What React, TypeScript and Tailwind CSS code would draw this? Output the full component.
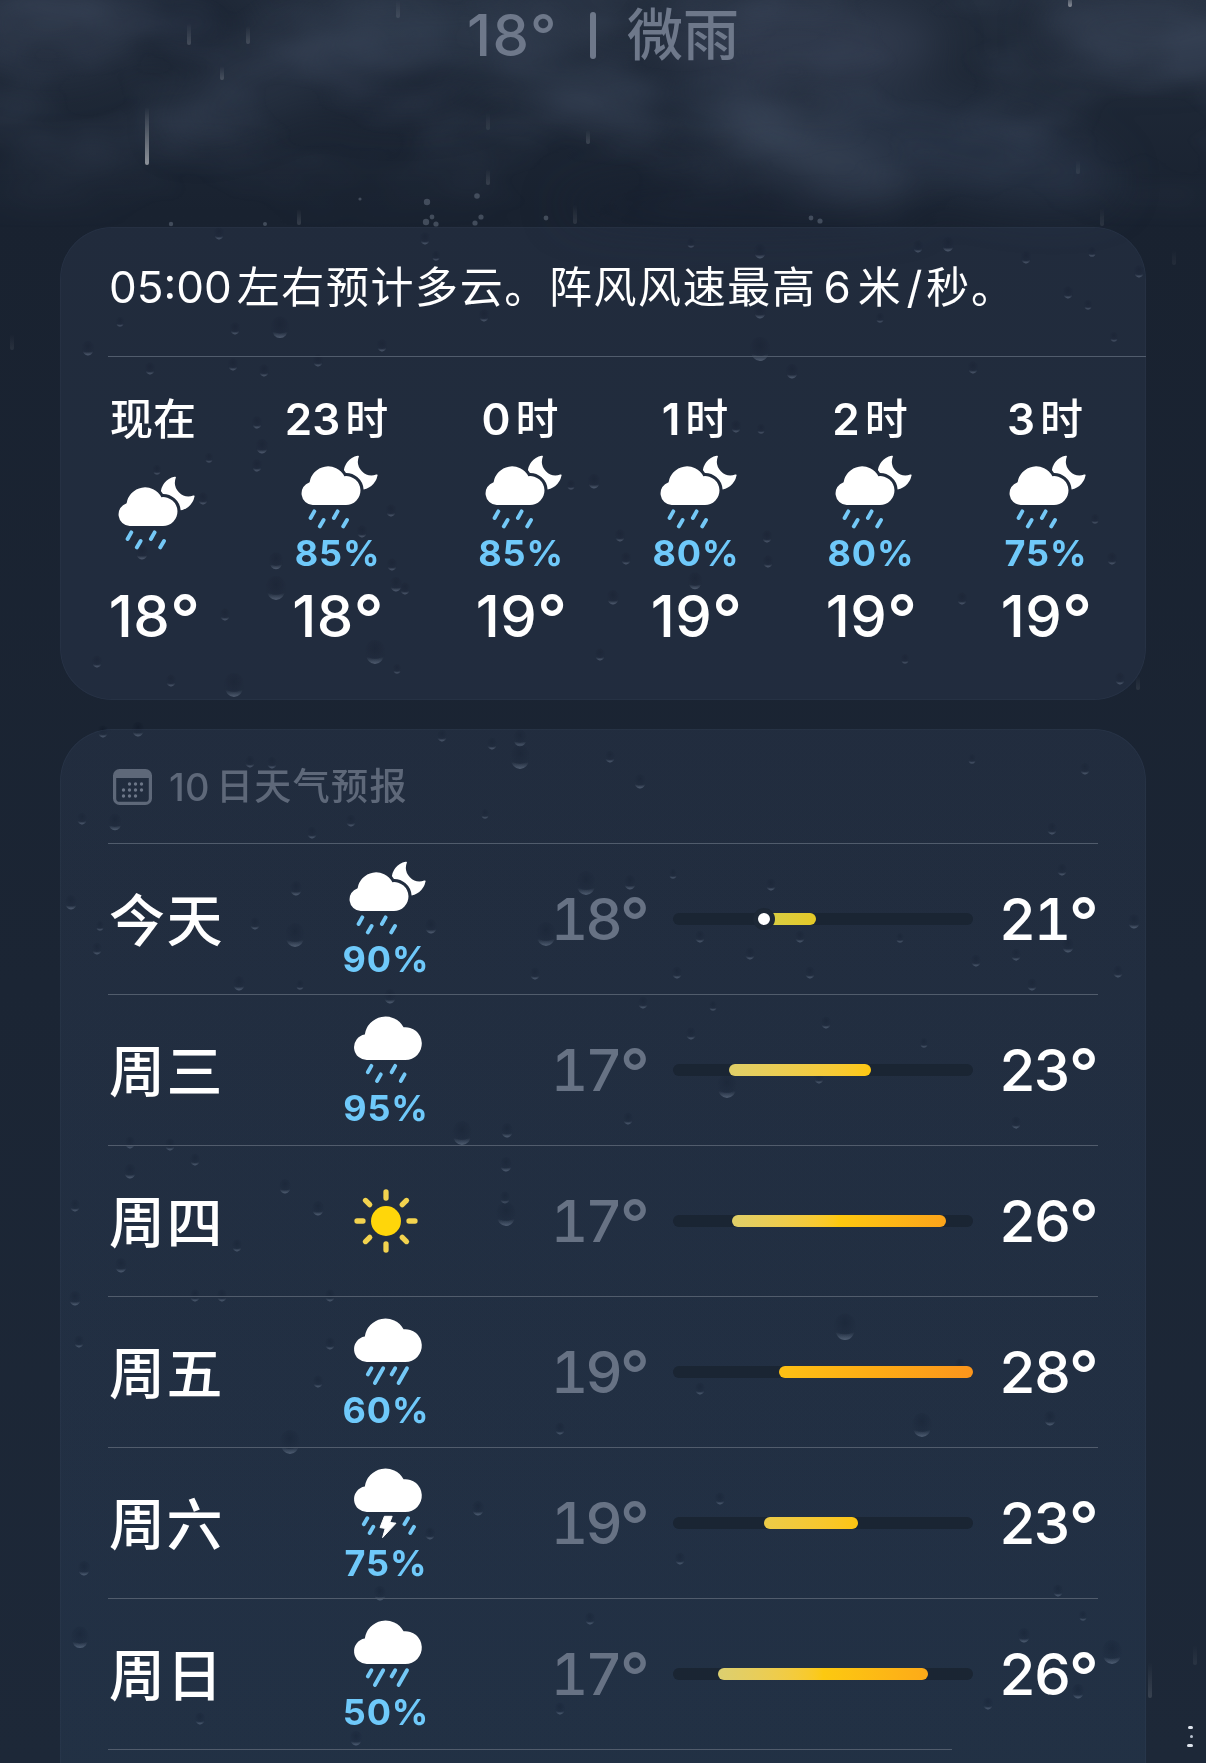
import type { ReactNode } from 'react';
import { clsx } from 'clsx';

type Sky = 'night-rain' | 'rain' | 'heavy-rain' | 'thunder' | 'sunny';

interface Hour {
  hour?: string;
  label: string;
  chance?: string;
  temp: string;
}

interface Day {
  name: string;
  sky: Sky;
  chance?: string;
  low: string;
  high: string;
  left: number;
  width: number;
  bar: string;
  now?: number;
}

const hours: Hour[] = [
  { label: '现在', temp: '18' },
  { hour: '23', label: '时', chance: '85%', temp: '18' },
  { hour: '0', label: '时', chance: '85%', temp: '19' },
  { hour: '1', label: '时', chance: '80%', temp: '19' },
  { hour: '2', label: '时', chance: '80%', temp: '19' },
  { hour: '3', label: '时', chance: '75%', temp: '19' },
];

// left / width / now are pixels on the 300px temperature track
const days: Day[] = [
  { name: '今天', sky: 'night-rain', chance: '90%', low: '18', high: '21', left: 85, width: 58, bar: 'from-[#d6cf48] to-[#e5c926]', now: 91 },
  { name: '周三', sky: 'rain', chance: '95%', low: '17', high: '23', left: 56, width: 142, bar: 'from-[#e0cf68] via-[#efcc48] to-[#fec80d]' },
  { name: '周四', sky: 'sunny', low: '17', high: '26', left: 59, width: 214, bar: 'from-[#e0cf68] via-[#fdc80f] to-[#fca41a]' },
  { name: '周五', sky: 'heavy-rain', chance: '60%', low: '19', high: '28', left: 106, width: 194, bar: 'from-[#fdc014] via-[#fdab14] to-[#fb951c]' },
  { name: '周六', sky: 'thunder', chance: '75%', low: '19', high: '23', left: 91, width: 94, bar: 'from-[#eccb48] to-[#fdc50f]' },
  { name: '周日', sky: 'heavy-rain', chance: '50%', low: '17', high: '26', left: 45, width: 210, bar: 'from-[#dccf70] via-[#fcc910] to-[#fdaa18]' },
];

// x, y, radius of the water beads on the glass
const beads: [number, number, number][] = [
  [219, 235, 5], [425, 240, 5], [436, 257, 4], [280, 330, 9], [235, 330, 5], [120, 323, 4], [88, 350, 6], [150, 370, 5],
  [233, 366, 5], [264, 372, 5], [318, 362, 5], [382, 347, 5], [484, 317, 5], [691, 244, 4], [760, 253, 6], [918, 248, 5],
  [948, 246, 6], [1026, 259, 5], [1092, 253, 4], [1139, 273, 5], [1068, 294, 5], [1088, 306, 4], [760, 313, 6], [880, 319, 4],
  [760, 352, 10], [792, 373, 6], [973, 369, 5], [1114, 338, 4], [209, 459, 4], [257, 424, 5], [262, 448, 6], [257, 467, 5],
  [157, 471, 4], [203, 500, 5], [142, 554, 6], [391, 512, 5], [362, 533, 5], [276, 591, 10], [276, 563, 7], [392, 566, 5],
  [396, 586, 6], [405, 590, 5], [225, 616, 5], [375, 655, 10], [234, 688, 10], [171, 682, 5], [97, 663, 5], [397, 670, 4],
  [594, 483, 6], [571, 486, 4], [736, 428, 5], [761, 430, 4], [620, 537, 5], [626, 560, 5], [613, 599, 6], [695, 583, 7],
  [767, 538, 5], [768, 563, 5], [600, 656, 5], [1112, 560, 5], [1095, 520, 4], [870, 470, 5], [905, 660, 4], [1120, 680, 5],
  [962, 600, 5], [103, 733, 5], [138, 731, 6], [442, 737, 5], [492, 745, 5], [520, 740, 7], [520, 760, 10], [250, 763, 5],
  [272, 764, 5], [82, 820, 5], [115, 824, 7], [312, 834, 5], [351, 822, 5], [485, 815, 4], [610, 758, 5], [640, 783, 6],
  [1085, 770, 5], [1052, 830, 5], [972, 760, 4], [71, 904, 6], [100, 927, 4], [97, 950, 5], [255, 925, 5], [295, 938, 10],
  [296, 890, 6], [431, 928, 6], [239, 985, 6], [300, 986, 4], [390, 998, 6], [586, 886, 10], [546, 937, 10], [630, 884, 6],
  [771, 886, 5], [673, 875, 4], [700, 938, 5], [800, 938, 5], [750, 955, 5], [535, 975, 5], [677, 974, 5], [810, 974, 5],
  [900, 939, 4], [976, 962, 5], [1016, 956, 5], [1068, 947, 6], [1134, 923, 6], [1118, 973, 5], [1062, 871, 5], [1032, 986, 5],
  [643, 1004, 5], [713, 1007, 4], [691, 1035, 5], [826, 1024, 5], [924, 1044, 4], [727, 1089, 10], [819, 1079, 5], [628, 1120, 5],
  [1016, 1124, 5], [462, 1136, 10], [507, 1132, 6], [506, 1166, 6], [505, 1199, 5], [506, 1217, 10], [130, 1144, 5], [170, 1146, 5],
  [195, 1161, 5], [130, 1173, 6], [285, 1188, 6], [318, 1210, 6], [75, 1207, 5], [121, 1267, 6], [237, 1247, 5], [75, 1300, 6],
  [79, 1343, 5], [195, 1297, 5], [222, 1297, 5], [330, 1297, 5], [330, 1345, 5], [290, 1445, 10], [318, 1383, 5], [845, 1330, 11],
  [922, 1428, 10], [960, 1366, 5], [700, 1390, 5], [560, 1430, 5], [1050, 1420, 6], [478, 1510, 6], [80, 1640, 9], [84, 1570, 6],
  [430, 1535, 5], [720, 1500, 5], [1083, 1617, 4], [1112, 1655, 10], [1024, 1637, 6], [1078, 1693, 6], [988, 1705, 5], [356, 1740, 6],
  [380, 1595, 6], [1058, 1592, 5], [590, 1620, 5], [680, 1560, 5], [200, 1720, 5], [560, 1710, 5],
];

// x, bottom y, length, opacity of the falling streaks
const streaks: [number, number, number, number][] = [
  [147, 165, 58, 0.5], [1070, 7, 12, 0.45], [189, 45, 22, 0.16], [248, 44, 18, 0.14], [398, 18, 18, 0.1], [222, 80, 14, 0.16],
  [488, 130, 18, 0.07], [588, 144, 14, 0.14], [488, 185, 16, 0.12], [575, 224, 20, 0.1], [299, 225, 16, 0.13], [1078, 174, 14, 0.07],
  [1102, 226, 18, 0.08], [12, 350, 16, 0.07], [1138, 690, 14, 0.08], [1150, 1698, 36, 0.12], [1195, 1665, 20, 0.06], [1174, 265, 16, 0.05],
];

const splashes: [number, number, number][] = [
  [427, 202, 3.2], [477, 196, 2.8], [432, 217, 2.4], [426, 222, 3.2], [436, 224, 2.6], [481, 217, 2.6], [475, 223, 2.6],
  [546, 218, 2.4], [811, 218, 2.4], [820, 221, 2.6], [171, 224, 2.2], [265, 224, 2], [360, 199, 1.6],
];

function Storm() {
  return (
    <svg viewBox="0 0 1206 1763" className="pointer-events-none absolute inset-0 h-full w-full">
      <defs>
        <filter id="wisps" x="0" y="0" width="1206" height="240" filterUnits="userSpaceOnUse" colorInterpolationFilters="sRGB">
          <feTurbulence type="fractalNoise" baseFrequency="0.006 0.011" numOctaves="3" seed="7" />
          <feColorMatrix values="0 0 0 0 0.29  0 0 0 0 0.34  0 0 0 0 0.43  2.6 0 0 0 -1.0" />
        </filter>
        <filter id="soft" x="-50%" y="-50%" width="200%" height="200%" colorInterpolationFilters="sRGB">
          <feGaussianBlur stdDeviation="22" />
        </filter>
        <linearGradient id="fade" x1="0" y1="0" x2="0" y2="1">
          <stop offset="0" stopColor="#fff" />
          <stop offset="0.5" stopColor="#fff" />
          <stop offset="0.95" stopColor="#000" />
        </linearGradient>
        <mask id="sky">
          <rect width="1206" height="240" fill="url(#fade)" />
        </mask>
        <linearGradient id="fall" x1="0" y1="0" x2="0" y2="1">
          <stop offset="0" stopColor="#fff" stopOpacity="0" />
          <stop offset="1" stopColor="#fff" />
        </linearGradient>
      </defs>
      <g filter="url(#soft)">
        <ellipse cx="50" cy="24" rx="90" ry="50" fill="#364256" opacity="0.4" />
        <ellipse cx="270" cy="85" rx="110" ry="30" fill="#364256" opacity="0.35" transform="rotate(-24 270 85)" />
        <ellipse cx="430" cy="30" rx="120" ry="34" fill="#3a475b" opacity="0.45" />
        <ellipse cx="580" cy="80" rx="110" ry="24" fill="#3a475b" opacity="0.4" transform="rotate(20 580 80)" />
        <ellipse cx="800" cy="45" rx="140" ry="46" fill="#3f4a60" opacity="0.5" />
        <ellipse cx="790" cy="145" rx="130" ry="26" fill="#4a576d" opacity="0.6" transform="rotate(24 790 145)" />
        <ellipse cx="970" cy="150" rx="150" ry="44" fill="#364358" opacity="0.45" transform="rotate(14 970 150)" />
        <ellipse cx="1150" cy="30" rx="110" ry="36" fill="#3c475c" opacity="0.45" />
        <ellipse cx="190" cy="22" rx="55" ry="26" fill="#17202f" opacity="0.7" />
        <ellipse cx="690" cy="92" rx="50" ry="24" fill="#17202f" opacity="0.55" />
        <ellipse cx="400" cy="92" rx="80" ry="20" fill="#17202f" opacity="0.5" />
        <ellipse cx="740" cy="205" rx="180" ry="20" fill="#17202f" opacity="0.5" />
      </g>
      <g mask="url(#sky)">
        <rect width="1206" height="240" filter="url(#wisps)" opacity="0.3" />
      </g>
      {streaks.map(([x, y, len, opacity]) => (
        <rect key={`${x}-${y}`} x={x - 2} y={y - len} width="4" height={len} rx="2" fill="url(#fall)" opacity={opacity} />
      ))}
      {splashes.map(([x, y, r]) => (
        <circle key={`${x}-${y}`} cx={x} cy={y} r={r} fill="#8e9bab" opacity="0.35" />
      ))}
    </svg>
  );
}

function Beads() {
  return (
    <svg viewBox="0 0 1206 1763" className="pointer-events-none absolute inset-0 h-full w-full">
      <defs>
        <radialGradient id="bead" cx="0.5" cy="0.35" r="0.65">
          <stop offset="0" stopColor="#0c1422" stopOpacity="0.42" />
          <stop offset="0.55" stopColor="#121b2a" stopOpacity="0.24" />
          <stop offset="1" stopColor="#1a2434" stopOpacity="0" />
        </radialGradient>
        <linearGradient id="glint" x1="0" y1="0" x2="0" y2="1">
          <stop offset="0.3" stopColor="#8c9aad" stopOpacity="0" />
          <stop offset="1" stopColor="#8c9aad" stopOpacity="0.5" />
        </linearGradient>
      </defs>
      {beads.map(([x, y, r]) => (
        <g key={`${x}-${y}`}>
          <ellipse cx={x} cy={y - r * 0.3} rx={r} ry={r * 1.2} fill="url(#bead)" />
          <path
            d={`M${x - r * 0.9} ${y - r * 0.1}a${r * 0.9} ${r} 0 0 0 ${r * 1.8} 0a${r * 0.95} ${r * 0.7} 0 0 1 ${-r * 1.8} 0z`}
            fill="url(#glint)"
          />
        </g>
      ))}
    </svg>
  );
}

const smallCloud =
  'M11.7 50A11.7 11.7 0 0 1 8.6 27.2A18.6 18.6 0 0 1 43.4 21.2A14.45 14.45 0 1 1 44.5 50Z';
const bigCloud =
  'M12.8 45A12.8 12.8 0 0 1 9.8 19.6A20.8 20.8 0 0 1 48.6 12.3A16.4 16.4 0 1 1 50.4 45Z';

function Drops({ d }: { d: string }) {
  return <path d={d} fill="none" stroke="#74c8f6" strokeWidth="3.9" strokeLinecap="round" />;
}

function SkyIcon({ sky }: { sky: Sky }) {
  if (sky === 'night-rain') {
    return (
      <svg viewBox="0 0 77 74" className="h-[74px] w-[77px] shrink-0">
        <mask id="behind-cloud">
          <rect width="77" height="74" fill="#fff" />
          <path d={smallCloud} fill="#000" stroke="#000" strokeWidth="6.4" />
        </mask>
        <path
          d="M56.6 0.8Q58.4 0.2 57.8 1.8A13.8 13.8 0 0 0 75.2 19.6Q77.2 19 76.5 20.6A17 17 0 1 1 56.6 0.8Z"
          fill="#fff"
          mask="url(#behind-cloud)"
        />
        <path d={smallCloud} fill="#fff" />
        <Drops d="M13.3 56.4L9.6 63M22.6 65L18.8 71.4M36.6 56.4L32.9 63M46 65L42.2 71.4" />
      </svg>
    );
  }
  if (sky === 'sunny') {
    return (
      <svg viewBox="-32 -32 64 64" className="size-16 shrink-0">
        <circle r="15" fill="#ffd60a" />
        <g stroke="#f3d34f" strokeWidth="5.3" strokeLinecap="round">
          {[0, 45, 90, 135, 180, 225, 270, 315].map((turn) => (
            <path key={turn} d="M0 -23V-29" transform={`rotate(${turn})`} />
          ))}
        </g>
      </svg>
    );
  }
  return (
    <svg viewBox="0 0 67 68" className={clsx('ml-[4px] h-[68px] w-[67px] shrink-0 overflow-visible', sky === 'thunder' && 'mb-[3px]')}>
      <path d={bigCloud} fill="#fff" />
      {sky === 'rain' && <Drops d="M16.4 50.9L12.8 57.2M25.8 59.4L22 66M40.2 50.9L36.6 57.2M49.6 59.4L45.8 66" />}
      {sky === 'heavy-rain' && <Drops d="M16.4 51.2L12.8 57.4M28.2 51.2L19.9 66M40.2 51.2L36.6 57.4M52 51.2L43.6 66" />}
      {sky === 'thunder' && (
        <>
          <Drops d="M12.3 51.2L8.8 57.2M18.3 59.8L14.7 66M53 51.2L49.4 57.2M59 59.8L55.3 66" />
          <path
            d="M29.4 49.3H37.2L34.8 55.4L41 56.2L27.6 70.6L30.2 61.4L25 60.6Z"
            fill="#fff"
            stroke="#fff"
            strokeWidth="1"
            strokeLinejoin="round"
          />
        </>
      )}
    </svg>
  );
}

function CalendarIcon() {
  const dots = [
    [16.5, 15], [22.5, 15], [28.5, 15],
    [10.5, 21], [16.5, 21], [22.5, 21], [28.5, 21],
    [10.5, 27], [16.5, 27], [22.5, 27],
  ];
  return (
    <svg viewBox="0 0 39 36" className="h-9 w-[39px]">
      <rect x="1.6" y="1.6" width="35.8" height="32.8" rx="5" fill="none" stroke="#5e6879" strokeWidth="3.2" />
      <path d="M1 9V6a5 5 0 0 1 5-5h27a5 5 0 0 1 5 5v3z" fill="#5e6879" />
      {dots.map(([x, y]) => (
        <circle key={`${x}-${y}`} cx={x} cy={y} r="1.7" fill="#6c7687" />
      ))}
    </svg>
  );
}

function Temp({ value }: { value: string }) {
  return (
    <span className="leading-[70px] whitespace-nowrap">
      {value}
      <span className="align-[-5px] text-[66px] leading-none tracking-normal">°</span>
    </span>
  );
}

function Chance({ children }: { children: ReactNode }) {
  return <div className="text-[36px] leading-[26px] font-bold tracking-[0.9px] text-[#6fc9fa]">{children}</div>;
}

function HourColumn({ item, wide }: { item: Hour; wide: boolean }) {
  return (
    <div className={clsx('flex shrink-0 flex-col items-center whitespace-nowrap', wide ? 'w-[103px]' : 'w-[86px]')}>
      <div className="flex h-[52px] items-center text-[43px] leading-[52px] font-semibold">
        {item.hour && <span className="mr-[5px] text-[44px]">{item.hour}</span>}
        <span className="font-medium">{item.label}</span>
      </div>
      <div className="flex h-[131px] flex-col items-center justify-center gap-[11px] pl-[6px]">
        {item.chance ? (
          <>
            <SkyIcon sky="night-rain" />
            <div className="-ml-[4px]">
              <Chance>{item.chance}</Chance>
            </div>
          </>
        ) : (
          <div className="pt-[4px]">
            <SkyIcon sky="night-rain" />
          </div>
        )}
      </div>
      <div className="mt-[5px] flex h-[70px] items-center pl-[3px] text-[58px] font-medium tracking-[0.3px]">
        <Temp value={item.temp} />
      </div>
    </div>
  );
}

function DayRow({ day }: { day: Day }) {
  return (
    <div className="flex h-[151px] items-center border-t border-[#515c6c]">
      <div className="w-[202px] pt-[3px] pl-[1px] text-[56px] leading-[60px] font-medium tracking-[1.5px] whitespace-nowrap">{day.name}</div>
      <div className={clsx('flex w-[152px] flex-col items-center', day.sky === 'night-rain' ? 'gap-[11px] pb-[5px]' : 'gap-[12px]', day.chance && 'pb-[4px]')}>
        <div className={clsx(day.sky === 'night-rain' && 'pl-[3px]')}>
          <SkyIcon sky={day.sky} />
        </div>
        {day.chance && <Chance>{day.chance}</Chance>}
      </div>
      <div className="flex w-[188px] justify-end text-[58px] font-medium tracking-[-3px] text-[#677284] tabular-nums">
        <Temp value={day.low} />
      </div>
      <div className="relative ml-[23px] h-3 w-[300px] rounded-full bg-[#1a2533]">
        <div
          className={clsx('absolute top-0 h-3 rounded-full bg-linear-to-r', day.bar)}
          style={{ left: day.left, width: day.width }}
        />
        {day.now !== undefined && (
          <div
            className="absolute -top-[5px] size-[22px] -translate-x-1/2 rounded-full border-[5px] border-[#1d2836] bg-white"
            style={{ left: day.now }}
          />
        )}
      </div>
      <div className="-mr-px flex flex-1 justify-end text-[58px] font-medium tracking-[-2.5px] tabular-nums">
        <Temp value={day.high} />
      </div>
    </div>
  );
}

export default function App() {
  return (
    <div className="relative h-[1763px] w-[1206px] overflow-hidden bg-linear-to-b from-[#222c3b] via-[#192230] via-12% to-[#1d2838] font-['Inter','Noto_Sans_CJK_SC',sans-serif] text-white">
      <Storm />
      <Beads />
      <div className="relative flex h-[227px] justify-center">
        <div className="flex h-[70px] items-center text-[58px] leading-[70px] font-medium text-[#6e788a]">
          <span className="tracking-[1.5px]">18°</span>
          <span className="mr-[31px] ml-[32px] h-[47px] w-[6px] rounded-full bg-[#6e788a]" />
          <span className="text-[56px]">微雨</span>
        </div>
      </div>

      <main className="relative mx-[60px] flex flex-col gap-[29px]">
        <section className="h-[473px] overflow-hidden rounded-[52px] bg-[#415270]/20 pl-12 ring-1 ring-[#8fa3c0]/5 ring-inset">
          <p className="flex h-[130px] items-center border-b border-[#515c6c] pb-[9px] text-[43px] tracking-[1.6px] whitespace-nowrap">
            <span className="mr-[5px] ml-[1px] text-[44px] tracking-[0px]">05:00</span>
            左右预计多云。阵风风速最高
            <span className="mr-[7px] ml-[7px] text-[44px] tracking-[0px]">6</span>米
            <span className="mx-[4px] text-[44px] tracking-[0px]">/</span>秒。
          </p>
          <div className="flex gap-[89px] pt-[36px] pl-[2px]">
            {hours.map((item) => (
              <HourColumn key={`${item.hour}${item.label}`} item={item} wide={item.hour === '23'} />
            ))}
          </div>
        </section>

        <section className="h-[1100px] rounded-t-[52px] bg-linear-to-b from-[#415270]/20 to-[#35547a]/20 px-12 ring-1 ring-[#8fa3c0]/5 ring-inset">
          <h2 className="flex h-[114px] items-center pt-[2px] pl-[5px] text-[37px] font-medium tracking-[1.4px] text-[#5e6879]">
            <CalendarIcon />
            <span className="mr-[6px] ml-[17px] text-[38px] tracking-[0.3px]">10</span>
            日天气预报
          </h2>
          {days.map((day) => (
            <DayRow key={day.name} day={day} />
          ))}
          <div className="w-[844px] border-t border-[#515c6c]" />
        </section>
      </main>

      <div className="absolute top-[1726px] right-[13px] flex flex-col items-end gap-[6px]">
        <span className="h-[3px] w-[5px] rounded-full bg-[#dfe5ee]" />
        <span className="h-[3px] w-[3px] rounded-full bg-[#b9c2cf]" />
        <span className="h-[3px] w-[6px] rounded-full bg-[#dfe5ee]" />
      </div>
    </div>
  );
}
